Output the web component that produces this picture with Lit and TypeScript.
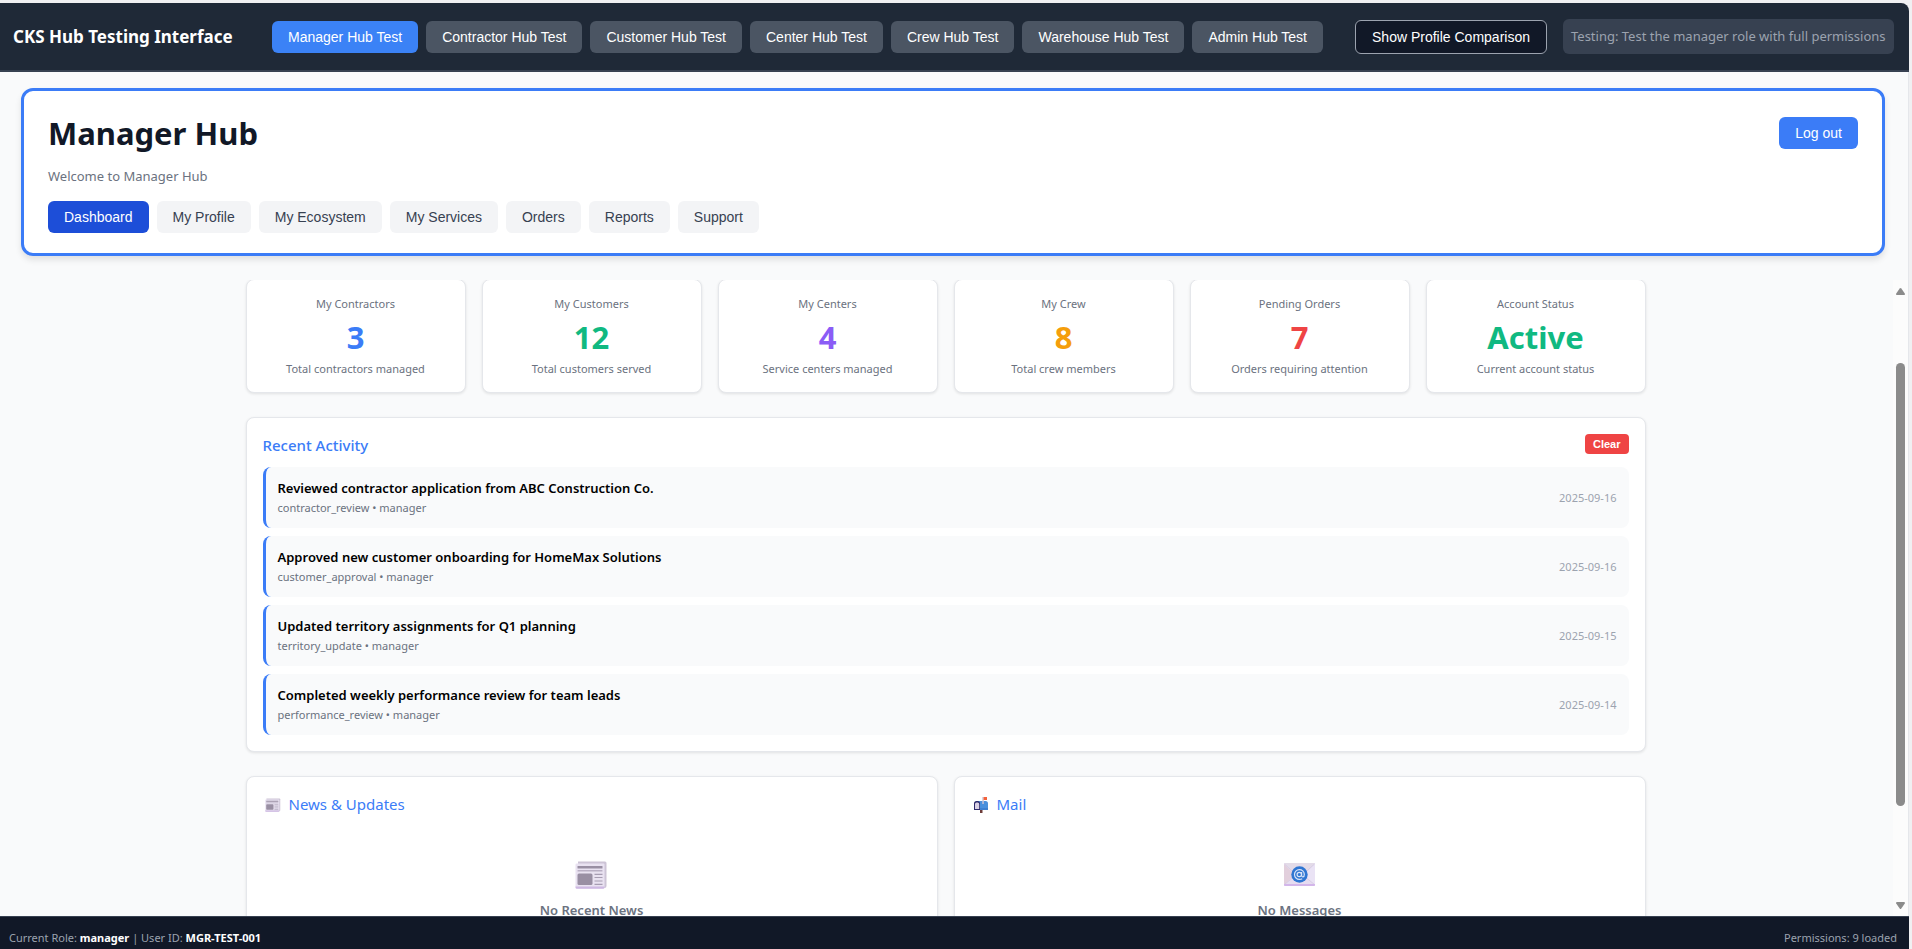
import { LitElement, html, css, svg } from "lit";
import { customElement, state } from "lit/decorators.js";
import { classMap } from "lit/directives/class-map.js";

const ROLES = ["Manager", "Contractor", "Customer", "Center", "Crew", "Warehouse", "Admin"];

const TABS = ["Dashboard", "My Profile", "My Ecosystem", "My Services", "Orders", "Reports", "Support"];

const STATS = [
  { label: "My Contractors", value: "3", note: "Total contractors managed", tone: "blue" },
  { label: "My Customers", value: "12", note: "Total customers served", tone: "green" },
  { label: "My Centers", value: "4", note: "Service centers managed", tone: "purple" },
  { label: "My Crew", value: "8", note: "Total crew members", tone: "amber" },
  { label: "Pending Orders", value: "7", note: "Orders requiring attention", tone: "red" },
  { label: "Account Status", value: "Active", note: "Current account status", tone: "green" },
];

const ACTIVITY = [
  { title: "Reviewed contractor application from ABC Construction Co.", type: "contractor_review", date: "2025-09-16" },
  { title: "Approved new customer onboarding for HomeMax Solutions", type: "customer_approval", date: "2025-09-16" },
  { title: "Updated territory assignments for Q1 planning", type: "territory_update", date: "2025-09-15" },
  { title: "Completed weekly performance review for team leads", type: "performance_review", date: "2025-09-14" },
];

const newspaper = svg`
  <path d="M3 1.5h27a1.5 1.5 0 0 1 1.5 1.5v23a2 2 0 0 1-2 2H3z" fill="#cdc4d6"/>
  <path d="M1.5 3.500h27a1 1 0 0 1 1 1V27a1.500 1.500 0 0 1-1.500 1.500H2A1.500 1.500 0 0 1 .5 27V4.500a1 1 0 0 1 1-1z" fill="#e9e2f1"/>
  <path d="M.5 26.500h29v.7a1.500 1.500 0 0 1-1.500 1.500H2a1.500 1.500 0 0 1-1.500-1.500z" fill="#cdb8e2"/>
  <rect x="2.500" y="6" width="25" height="2.500" rx=".5" fill="#998fa3"/>
  <rect x="2.500" y="10" width="25" height="1.600" rx=".5" fill="#b9afc4"/>
  <rect x="2.500" y="13.500" width="15" height="11.500" rx="1.500" fill="#998fa3"/>
  <path d="M19.500 14.300h8M19.500 17.500h8M19.500 21h8M19.500 24.400h8" stroke="#a79db2" stroke-width="1.200"/>`;

const mailbox = svg`
  <path d="M7 14h2.500v3H7z" fill="#6d3d3a"/>
  <path d="M4 5h8.500A2.500 2.500 0 0 1 15 7.500V14H4z" fill="#4a90dc"/>
  <path d="M4 12h11v2H4z" fill="#3e80d0"/>
  <path d="M1 7.500A2.500 2.500 0 0 1 3.500 5h1A2.500 2.500 0 0 1 7 7.500V14H1z" fill="#2e2a6b"/>
  <path d="M2 8a1.600 1.600 0 0 1 1.600-1.600h1A1.600 1.600 0 0 1 6.200 8v5H2z" fill="#d9d0e4"/>
  <path d="M9.300 1h1.500v7H9.300z" fill="#cbc3d4"/>
  <path d="M10.600 1H14v3h-3.400z" fill="#f4623a"/>`;

const envelope = svg`
  <rect x="1" y="0" width="31" height="23" rx="1" fill="#e6dcf0"/>
  <path d="M1 1v21l11-10z" fill="#e2cfdc"/>
  <path d="M32 1v21L21 12z" fill="#eae3f5"/>
  <path d="M1 0h31L18 13q-1.500 1.200-3 0z" fill="#e3dbe8"/>
  <path d="M1.500 1 13 11.500M31.500 1 20 11.500M1.500 21.500 12 13M31.500 21.500 21 13" stroke="#cfc2dc" stroke-width=".6" fill="none"/>
  <path d="M1 21h31v1a1 1 0 0 1-1 1H2a1 1 0 0 1-1-1z" fill="#d3b6ea"/>
  <circle cx="16.500" cy="11.500" r="8.200" fill="#2f76d2"/>
  <circle cx="16.300" cy="11.500" r="2.200" fill="none" stroke="#d9e4f8" stroke-width="1.200"/>
  <path d="M18.600 9v3.500q.2 1.500 1.400 1.400 1.400-.2 1.300-2.600a4.900 4.900 0 1 0-4.900 5.100q1.700 0 2.800-.7" fill="none" stroke="#d9e4f8" stroke-width="1.200"/>`;

@customElement("app-root")
export class AppRoot extends LitElement {
  @state() private role = "Manager";
  @state() private tab = "Dashboard";
  @state() private activity = ACTIVITY;

  static styles = css`
    :host {
      display: flex;
      flex-direction: column;
      height: 100vh;
      box-sizing: border-box;
      padding: 3px 3px 0 0;
      overflow: hidden;
      background: #f0f0f2;
      color: #000;
      font-family: "Segoe UI", "Noto Sans", sans-serif;
    }
    * { box-sizing: border-box; }
    h1, h2, h3, p, ul { margin: 0; padding: 0; }
    button {
      font: 14px/16px "Liberation Sans", Arial, sans-serif;
      padding: 8px 16px;
      border: none;
      border-radius: 6px;
      white-space: nowrap;
      cursor: pointer;
    }
    .topbar {
      display: flex;
      align-items: center;
      gap: 32px;
      flex: none;
      padding: 16px 16px 16px 13px;
      background: #1f2937;
      border-bottom: 2px solid #374151;
      border-radius: 0 8px 0 0;
    }
    .brand {
      flex: 0 0 227px;
      font-size: 17px;
      line-height: 24px;
      font-weight: 700;
      color: #fff;
      white-space: nowrap;
    }
    .row { display: flex; gap: 8px; }
    .role { background: #4b5563; color: #fff; }
    .role.on { background: #3b82f6; }
    .tools { display: flex; align-items: center; gap: 16px; margin-left: auto; }
    .compare { background: #111827; color: #fff; border: 1px solid #9ca3af; }
    .hint {
      padding: 8px;
      border-radius: 6px;
      background: #374151;
      color: #9ca3af;
      font-size: 13px;
      line-height: 19px;
      white-space: nowrap;
    }
    .page {
      flex: 1;
      min-height: 0;
      display: flex;
      flex-direction: column;
      background: #f9fafb;
      border-right: 1px solid #e5e7eb;
    }
    .hub {
      flex: none;
      margin: 16px 23px 24px 21px;
      padding: 24px 24px 20px;
      background: #fff;
      border: 3px solid #3b7cf7;
      border-radius: 12px;
      box-shadow: 0 4px 6px rgba(0, 0, 0, 0.1);
    }
    .hubhead { display: flex; justify-content: space-between; align-items: center; }
    .hubhead h1 { font-size: 31px; line-height: 36px; font-weight: 700; color: #111827; }
    .logout { background: #3b7cf7; color: #fff; }
    .welcome { margin: 16px 0; font-size: 13px; line-height: 18px; color: #6b7280; }
    .tab { background: #f3f4f6; color: #374151; }
    .tab.on { background: #1d4ed8; color: #fff; }
    .body { flex: 1; min-height: 0; display: flex; }
    .scroll { flex: 1; min-width: 0; overflow: hidden; padding-right: 2px; }
    .wrap { width: 100%; max-width: 1400px; margin: -1px auto 0; }
    .stats { display: grid; grid-template-columns: repeat(6, 1fr); gap: 16px; margin-bottom: 24px; }
    .card {
      background: #fff;
      border: 1px solid #e5e7eb;
      border-radius: 8px;
      box-shadow: 0 1px 3px rgba(0, 0, 0, 0.1);
    }
    .stat { padding: 16px 16px 15px; text-align: center; font-size: 11px; line-height: 16px; color: #6b7280; }
    .stat strong { display: block; margin: 9px 0 8px; font-size: 31px; line-height: 32px; font-weight: 700; }
    .blue { color: #3b7cf7; }
    .green { color: #10b981; }
    .purple { color: #8b5cf6; }
    .amber { color: #f59e0b; }
    .red { color: #ef4444; }
    .recent { padding: 16px; margin-bottom: 24px; }
    .recenthead { display: flex; justify-content: space-between; align-items: flex-start; margin-bottom: 10px; }
    h2 { font-size: 15px; line-height: 23px; font-weight: 500; color: #3b7cf7; }
    .clear { padding: 4px 8px; border-radius: 4px; background: #ef4444; color: #fff; font-size: 11px; line-height: 12px; font-weight: 700; }
    .list { display: flex; flex-direction: column; gap: 8px; list-style: none; }
    .item {
      display: flex;
      justify-content: space-between;
      align-items: center;
      padding: 12px;
      background: #f9fafb;
      border-left: 3px solid #3b7cf7;
      border-radius: 8px;
    }
    .item h3 { font-size: 13px; line-height: 19px; font-weight: 600; }
    .item p { margin-top: 2px; font-size: 11px; line-height: 16px; color: #6b7280; }
    .item time { font-size: 11px; line-height: 16px; color: #9ca3af; }
    .pair { display: grid; grid-template-columns: 1fr 1fr; gap: 16px; }
    .box { padding: 16px; height: 240px; }
    .box h2 { display: flex; align-items: center; gap: 8px; font-weight: 400; }
    .box h2 svg { width: 16px; height: 16px; margin-left: 2px; }
    .empty { display: flex; flex-direction: column; align-items: center; padding-top: 44px; }
    .empty svg { width: 33px; height: 30px; }
    .empty h3 { margin-top: 10px; font-size: 13px; line-height: 20px; font-weight: 600; color: #6b7280; }
    .bar {
      flex: none;
      width: 15px;
      display: flex;
      flex-direction: column;
      align-items: center;
      padding: 8px 0 7px;
      background: #fcfcfc;
    }
    .bar svg { flex: none; width: 9px; height: 7px; fill: #8b8b8b; }
    .thumb { width: 9px; margin: 68px 0 auto; flex: 0 1 443px; border-radius: 5px; background: #8b8b8b; }
    .status {
      flex: none;
      display: flex;
      justify-content: space-between;
      padding: 12px 12px 3px 9px;
      background: #111827;
      border-top: 1px solid #374151;
      color: #9ca3af;
      font-size: 11px;
      line-height: 17px;
    }
    .status b { color: #fff; }
  `;

  render() {
    return html`
      <header class="topbar">
        <div class="brand">CKS Hub Testing Interface</div>
        <nav class="row">
          ${ROLES.map(
            (r) => html`<button class=${classMap({ role: true, on: r === this.role })} @click=${() => (this.role = r)}>${r} Hub Test</button>`
          )}
        </nav>
        <div class="tools">
          <button class="compare">Show Profile Comparison</button>
          <div class="hint">Testing: Test the ${this.role.toLowerCase()} role with full permissions</div>
        </div>
      </header>
      <div class="page">
        <section class="hub">
          <div class="hubhead">
            <h1>${this.role} Hub</h1>
            <button class="logout">Log out</button>
          </div>
          <p class="welcome">Welcome to ${this.role} Hub</p>
          <nav class="row">
            ${TABS.map(
              (t) => html`<button class=${classMap({ tab: true, on: t === this.tab })} @click=${() => (this.tab = t)}>${t}</button>`
            )}
          </nav>
        </section>
        <div class="body">
          <main class="scroll">
            <div class="wrap">
              <div class="stats">
                ${STATS.map(
                  (s) => html`<div class="card stat">
                    <div>${s.label}</div>
                    <strong class=${s.tone}>${s.value}</strong>
                    <div>${s.note}</div>
                  </div>`
                )}
              </div>
              <section class="card recent">
                <div class="recenthead">
                  <h2>Recent Activity</h2>
                  <button class="clear" @click=${() => (this.activity = [])}>Clear</button>
                </div>
                <ul class="list">
                  ${this.activity.map(
                    (a) => html`<li class="item">
                      <div>
                        <h3>${a.title}</h3>
                        <p>${a.type} • manager</p>
                      </div>
                      <time>${a.date}</time>
                    </li>`
                  )}
                </ul>
              </section>
              <div class="pair">
                <section class="card box">
                  <h2><svg viewBox="0 0 33 30" aria-hidden="true">${newspaper}</svg>News &amp; Updates</h2>
                  <div class="empty">
                    <svg viewBox="0 0 33 30" aria-hidden="true">${newspaper}</svg>
                    <h3>No Recent News</h3>
                  </div>
                </section>
                <section class="card box">
                  <h2><svg viewBox="0 1 16 16" aria-hidden="true">${mailbox}</svg>Mail</h2>
                  <div class="empty">
                    <svg viewBox="0 -3 33 30" aria-hidden="true">${envelope}</svg>
                    <h3>No Messages</h3>
                  </div>
                </section>
              </div>
            </div>
          </main>
          <div class="bar" aria-hidden="true">
            <svg viewBox="0 0 9 7"><path d="M3.700.6q.8-1 1.600 0L8.800 5.500Q9.200 7 8 7H1Q-.2 7 .2 5.500z" /></svg>
            <div class="thumb"></div>
            <svg viewBox="0 0 9 7"><path d="M3.700 6.400q.8 1 1.600 0L8.800 1.500Q9.200 0 8 0H1Q-.2 0 .2 1.500z" /></svg>
          </div>
        </div>
      </div>
      <footer class="status">
        <span>Current Role: <b>${this.role.toLowerCase()}</b> | User ID: <b>MGR-TEST-001</b></span>
        <span>Permissions: 9 loaded</span>
      </footer>
    `;
  }
}
